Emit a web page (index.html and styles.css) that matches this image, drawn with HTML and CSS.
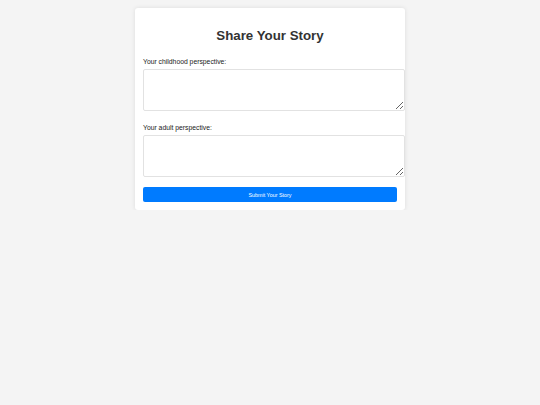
FILE: index.html
```html
<!DOCTYPE html>
<html lang="en">
<head>
<meta charset="utf-8">
<title>Share Your Story</title>
<link rel="stylesheet" href="styles.css">
</head>
<body>
<main class="card">
  <h1 class="title">Share Your Story</h1>
  <form class="form">
    <label class="label" for="child">Your childhood perspective:</label>
    <textarea class="field" id="child"></textarea>
    <label class="label" for="adult">Your adult perspective:</label>
    <textarea class="field" id="adult"></textarea>
    <button class="submit" type="button">Submit Your Story</button>
  </form>
</main>
</body>
</html>
```

FILE: styles.css
```css
html, body {
  margin: 0;
  padding: 0;
  background: #f4f4f4;
  font-family: "Liberation Sans", Arial, sans-serif;
  color: #222;
}
body {
  padding-top: 8px;
}
.card {
  width: 254px;
  margin: 0 auto;
  padding: 8px;
  background: #fff;
  border-radius: 3px;
  box-shadow: 0 0 4px rgba(0, 0, 0, 0.1);
}
.title {
  margin: 12px 0 15px;
  font-size: 13.3px;
  font-weight: bold;
  text-align: center;
  color: #333;
  line-height: 1.15;
}
.form {
  display: flex;
  flex-direction: column;
}
.label {
  font-size: 6.8px;
  line-height: 8px;
  margin-bottom: 3px;
  color: #1a1a1a;
}
.field {
  display: block;
  box-sizing: content-box;
  width: 100%;
  height: 34px;
  padding: 3px;
  margin: 0 0 13px;
  border: 1px solid #e2e2e2;
  border-radius: 2px;
  font-family: inherit;
  font-size: 6.8px;
  resize: vertical;
}
.submit {
  margin-top: -3px;
  height: 15px;
  padding: 0;
  border: none;
  border-radius: 2px;
  background: #007bff;
  color: #fff;
  font-family: inherit;
  font-size: 5.4px;
}
```
